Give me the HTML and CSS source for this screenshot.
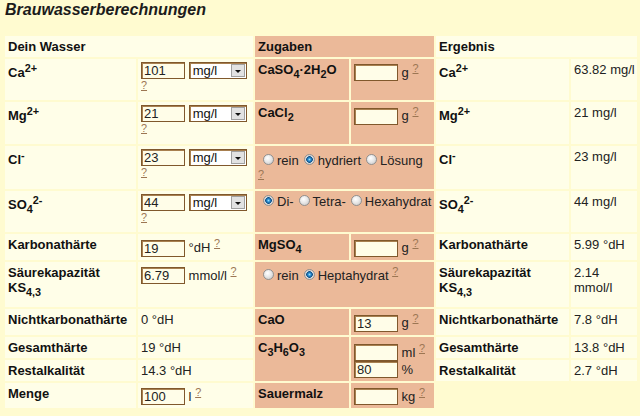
FILE: index.html
```html
<!DOCTYPE html>
<html lang="de">
<head>
    <meta charset="UTF-8">
    <title>Brauwasserberechnungen</title>
    <link rel="stylesheet" href="styles.css">
</head>
<body>
    <h1>Brauwasserberechnungen</h1>

    <table class="calc">
        <colgroup>
            <col class="c-label">
            <col class="c-input">
            <col class="c-add">
            <col class="c-amount">
            <col class="c-rlabel">
            <col class="c-result">
        </colgroup>
        <tr>
            <td class="lbl" colspan="2">Dein Wasser</td>
            <td class="z lbl" colspan="2">Zugaben</td>
            <td class="lbl" colspan="2">Ergebnis</td>
        </tr>
        <tr>
            <td class="lbl">Ca<sup>2+</sup></td>
            <td><input class="num" value="101"> <span class="sel"><select><option>mg/l</option></select></span> <sup class="help"><a href="#">?</a></sup></td>
            <td class="z lbl">CaSO<sub>4</sub>·2H<sub>2</sub>O</td>
            <td class="z"><input class="num"> g <sup class="help"><a href="#">?</a></sup></td>
            <td class="lbl">Ca<sup>2+</sup></td>
            <td class="res">63.82 mg/l</td>
        </tr>
        <tr>
            <td class="lbl">Mg<sup>2+</sup></td>
            <td><input class="num" value="21"> <span class="sel"><select><option>mg/l</option></select></span> <sup class="help"><a href="#">?</a></sup></td>
            <td class="z lbl">CaCl<sub>2</sub></td>
            <td class="z"><input class="num"> g <sup class="help"><a href="#">?</a></sup></td>
            <td class="lbl">Mg<sup>2+</sup></td>
            <td class="res">21 mg/l</td>
        </tr>
        <tr>
            <td class="lbl">Cl<sup>-</sup></td>
            <td><input class="num" value="23"> <span class="sel"><select><option>mg/l</option></select></span> <sup class="help"><a href="#">?</a></sup></td>
            <td class="z opts lowered" colspan="2"><input type="radio" class="opt" name="cacl">rein<input type="radio" class="opt" name="cacl" checked>hydriert<input type="radio" class="opt" name="cacl">Lösung <sup class="help"><a href="#">?</a></sup></td>
            <td class="lbl">Cl<sup>-</sup></td>
            <td class="res">23 mg/l</td>
        </tr>
        <tr>
            <td class="lbl">SO<sub>4</sub><sup>2-</sup></td>
            <td><input class="num" value="44"> <span class="sel"><select><option>mg/l</option></select></span> <sup class="help"><a href="#">?</a></sup></td>
            <td class="z opts single" colspan="2"><input type="radio" class="opt" name="hydrat" checked>Di-<input type="radio" class="opt" name="hydrat">Tetra-<input type="radio" class="opt" name="hydrat">Hexahydrat</td>
            <td class="lbl">SO<sub>4</sub><sup>2-</sup></td>
            <td class="res">44 mg/l</td>
        </tr>
        <tr>
            <td class="lbl">Karbonathärte</td>
            <td><input class="num" value="19"> °dH <sup class="help"><a href="#">?</a></sup></td>
            <td class="z lbl">MgSO<sub>4</sub></td>
            <td class="z"><input class="num"> g <sup class="help"><a href="#">?</a></sup></td>
            <td class="lbl">Karbonathärte</td>
            <td class="res">5.99 °dH</td>
        </tr>
        <tr class="r-tall">
            <td class="lbl">Säurekapazität<br>KS<sub>4,3</sub></td>
            <td><input class="num" value="6.79"> mmol/l <sup class="help"><a href="#">?</a></sup></td>
            <td class="z opts" colspan="2"><input type="radio" class="opt" name="mgso">rein<input type="radio" class="opt" name="mgso" checked>Heptahydrat <sup class="help"><a href="#">?</a></sup></td>
            <td class="lbl">Säurekapazität<br>KS<sub>4,3</sub></td>
            <td class="res">2.14 mmol/l</td>
        </tr>
        <tr>
            <td class="lbl">Nichtkarbonathärte</td>
            <td>0 °dH</td>
            <td class="z lbl">CaO</td>
            <td class="z"><input class="num" value="13"> g <sup class="help"><a href="#">?</a></sup></td>
            <td class="lbl">Nichtkarbonathärte</td>
            <td class="res">7.8 °dH</td>
        </tr>
        <tr>
            <td class="lbl">Gesamthärte</td>
            <td>19 °dH</td>
            <td class="z lbl" rowspan="2">C<sub>3</sub>H<sub>6</sub>O<sub>3</sub></td>
            <td class="z stack" rowspan="2"><input class="num"> ml <sup class="help"><a href="#">?</a></sup><br><input class="num" value="80"> %</td>
            <td class="lbl">Gesamthärte</td>
            <td class="res">13.8 °dH</td>
        </tr>
        <tr>
            <td class="lbl">Restalkalität</td>
            <td>14.3 °dH</td>
            <td class="lbl">Restalkalität</td>
            <td class="res">2.7 °dH</td>
        </tr>
        <tr>
            <td class="lbl">Menge</td>
            <td><input class="num" value="100"> l <sup class="help"><a href="#">?</a></sup></td>
            <td class="z lbl">Sauermalz</td>
            <td class="z"><input class="num"> kg <sup class="help"><a href="#">?</a></sup></td>
        </tr>
    </table>
</body>
</html>
```

FILE: styles.css
```css
body {
    margin: 0;
    padding: 0 3px;
    background-color: #fffbd0;
    font-family: "Liberation Sans", Arial, sans-serif;
    font-size: 13px;
    color: #111;
    overflow-x: hidden;
}
h1 {
    margin: 1px 0 15px 2px;
    font-size: 16px;
    line-height: 18px;
    font-style: italic;
    font-weight: bold;
    color: #1c1c1c;
}
.calc {
    table-layout: fixed;
    width: 636px;
    border-collapse: separate;
    border-spacing: 2px;
}
.c-label { width: 131px; }
.c-input { width: 115px; }
.c-add { width: 94px; }
.c-amount { width: 83px; }
.c-rlabel { width: 133px; }
.c-result { width: 66px; }

.calc td {
    padding: 3px;
    vertical-align: top;
    background-color: #fffee8;
    color: #222;
}
.calc td.z {
    background-color: #ebb999;
}
.calc td.lbl {
    font-weight: bold;
    color: #111;
}
.calc td.res {
    padding-right: 2px;
}
.calc .r-tall td.lbl {
    padding-bottom: 10px;
}
.calc td.lowered {
    padding-top: 7px;
}
.calc td.stack {
    padding-top: 5px;
}
.calc td.single {
    white-space: nowrap;
}
.help a {
    color: #9c7653;
}
.num {
    box-sizing: border-box;
    width: 44px;
    height: 17px;
    margin: 0;
    padding: 0 2px;
    border: 1px solid #80582c;
    box-shadow: inset 1px 1px 0 #a88050;
    background-color: #fffde8;
    font: 13px "Liberation Sans", Arial, sans-serif;
    color: #222;
}
.sel {
    position: relative;
    display: inline-block;
}
.sel select {
    appearance: none;
    box-sizing: border-box;
    width: 58px;
    height: 17px;
    margin: 0;
    padding: 0 0 0 3px;
    border: 1px solid #80582c;
    box-shadow: inset 1px 1px 0 #a88050;
    border-radius: 0;
    background-color: #fff;
    font: 13px "Liberation Sans", Arial, sans-serif;
    color: #111;
}
.sel::after {
    content: "";
    position: absolute;
    top: 2px;
    right: 2px;
    width: 14px;
    height: 13px;
    box-sizing: border-box;
    border: 1px solid #a0a0a0;
    background-color: #e2e2e2;
}
.sel::before {
    content: "";
    position: absolute;
    top: 8px;
    right: 6px;
    border-left: 3px solid transparent;
    border-right: 3px solid transparent;
    border-top: 3px solid #111;
    z-index: 1;
}
.opt {
    appearance: none;
    box-sizing: border-box;
    width: 11px;
    height: 11px;
    margin: 0 3px 0 5px;
    border: 1px solid #909090;
    border-radius: 50%;
    background: radial-gradient(circle at 40% 35%, #ffffff 0, #e8e8e8 45%, #c2c2c2 100%);
}
.opt:checked {
    background: radial-gradient(circle, #9ee0ff 0, #2a8fd2 1.5px, #0f4f86 3px, #dcdcdc 3.6px, #c0c0c0 100%);
}
```
